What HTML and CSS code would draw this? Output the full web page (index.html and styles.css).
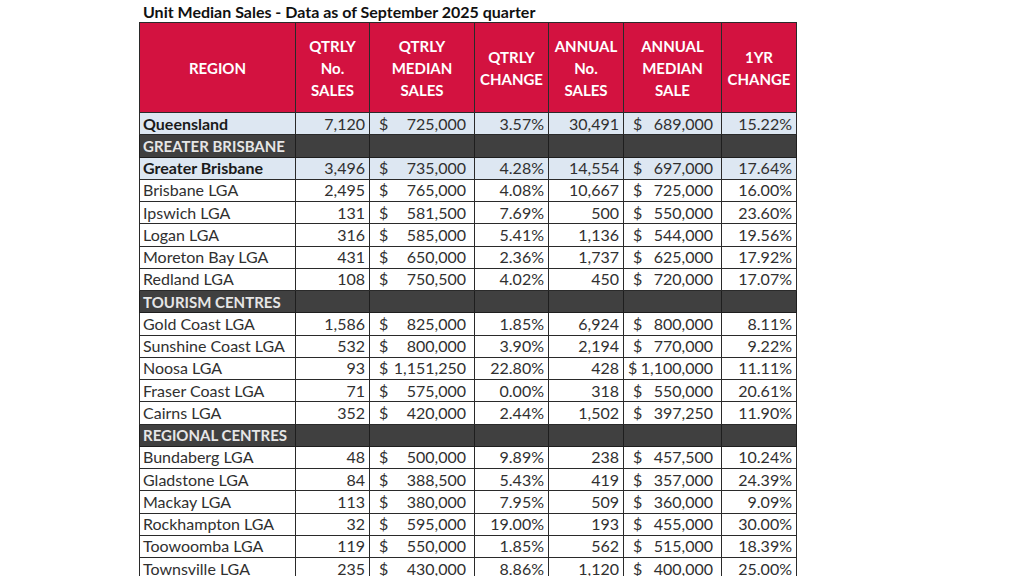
FILE: index.html
```html
<!DOCTYPE html>
<html>
<head>
<meta charset="utf-8">
<link rel="stylesheet" href="styles.css">
</head>
<body>
<div class="sheet">
  <h1 class="title">Unit Median Sales - Data as of September 2025 quarter</h1>
  <table class="grid">
    <colgroup>
      <col class="c-region"><col class="c-num"><col class="c-med"><col class="c-chg"><col class="c-anum"><col class="c-amed"><col class="c-yr">
    </colgroup>
    <thead>
      <tr>
        <th>REGION</th>
        <th>QTRLY<br>No.<br>SALES</th>
        <th>QTRLY<br>MEDIAN<br>SALES</th>
        <th>QTRLY<br>CHANGE</th>
        <th>ANNUAL<br>No.<br>SALES</th>
        <th>ANNUAL<br>MEDIAN<br>SALE</th>
        <th>1YR<br>CHANGE</th>
      </tr>
    </thead>
    <tbody>
      <tr class="total"><td class="name">Queensland</td><td>7,120</td><td class="money"><span>$</span><span>725,000</span></td><td>3.57%</td><td>30,491</td><td class="money"><span>$</span><span>689,000</span></td><td>15.22%</td></tr>
      <tr class="section"><td class="name">GREATER BRISBANE</td><td></td><td></td><td></td><td></td><td></td><td></td></tr>
      <tr class="total"><td class="name">Greater Brisbane</td><td>3,496</td><td class="money"><span>$</span><span>735,000</span></td><td>4.28%</td><td>14,554</td><td class="money"><span>$</span><span>697,000</span></td><td>17.64%</td></tr>
      <tr><td class="name">Brisbane LGA</td><td>2,495</td><td class="money"><span>$</span><span>765,000</span></td><td>4.08%</td><td>10,667</td><td class="money"><span>$</span><span>725,000</span></td><td>16.00%</td></tr>
      <tr><td class="name">Ipswich LGA</td><td>131</td><td class="money"><span>$</span><span>581,500</span></td><td>7.69%</td><td>500</td><td class="money"><span>$</span><span>550,000</span></td><td>23.60%</td></tr>
      <tr><td class="name">Logan LGA</td><td>316</td><td class="money"><span>$</span><span>585,000</span></td><td>5.41%</td><td>1,136</td><td class="money"><span>$</span><span>544,000</span></td><td>19.56%</td></tr>
      <tr><td class="name">Moreton Bay LGA</td><td>431</td><td class="money"><span>$</span><span>650,000</span></td><td>2.36%</td><td>1,737</td><td class="money"><span>$</span><span>625,000</span></td><td>17.92%</td></tr>
      <tr><td class="name">Redland LGA</td><td>108</td><td class="money"><span>$</span><span>750,500</span></td><td>4.02%</td><td>450</td><td class="money"><span>$</span><span>720,000</span></td><td>17.07%</td></tr>
      <tr class="section"><td class="name">TOURISM CENTRES</td><td></td><td></td><td></td><td></td><td></td><td></td></tr>
      <tr><td class="name">Gold Coast LGA</td><td>1,586</td><td class="money"><span>$</span><span>825,000</span></td><td>1.85%</td><td>6,924</td><td class="money"><span>$</span><span>800,000</span></td><td>8.11%</td></tr>
      <tr><td class="name">Sunshine Coast LGA</td><td>532</td><td class="money"><span>$</span><span>800,000</span></td><td>3.90%</td><td>2,194</td><td class="money"><span>$</span><span>770,000</span></td><td>9.22%</td></tr>
      <tr><td class="name">Noosa LGA</td><td>93</td><td class="money"><span>$</span><span>1,151,250</span></td><td>22.80%</td><td>428</td><td class="money tight"><span>$</span><span>1,100,000</span></td><td>11.11%</td></tr>
      <tr><td class="name">Fraser Coast LGA</td><td>71</td><td class="money"><span>$</span><span>575,000</span></td><td>0.00%</td><td>318</td><td class="money"><span>$</span><span>550,000</span></td><td>20.61%</td></tr>
      <tr><td class="name">Cairns LGA</td><td>352</td><td class="money"><span>$</span><span>420,000</span></td><td>2.44%</td><td>1,502</td><td class="money"><span>$</span><span>397,250</span></td><td>11.90%</td></tr>
      <tr class="section"><td class="name">REGIONAL CENTRES</td><td></td><td></td><td></td><td></td><td></td><td></td></tr>
      <tr><td class="name">Bundaberg LGA</td><td>48</td><td class="money"><span>$</span><span>500,000</span></td><td>9.89%</td><td>238</td><td class="money"><span>$</span><span>457,500</span></td><td>10.24%</td></tr>
      <tr><td class="name">Gladstone LGA</td><td>84</td><td class="money"><span>$</span><span>388,500</span></td><td>5.43%</td><td>419</td><td class="money"><span>$</span><span>357,000</span></td><td>24.39%</td></tr>
      <tr><td class="name">Mackay LGA</td><td>113</td><td class="money"><span>$</span><span>380,000</span></td><td>7.95%</td><td>509</td><td class="money"><span>$</span><span>360,000</span></td><td>9.09%</td></tr>
      <tr><td class="name">Rockhampton LGA</td><td>32</td><td class="money"><span>$</span><span>595,000</span></td><td>19.00%</td><td>193</td><td class="money"><span>$</span><span>455,000</span></td><td>30.00%</td></tr>
      <tr><td class="name">Toowoomba LGA</td><td>119</td><td class="money"><span>$</span><span>550,000</span></td><td>1.85%</td><td>562</td><td class="money"><span>$</span><span>515,000</span></td><td>18.39%</td></tr>
      <tr><td class="name">Townsville LGA</td><td>235</td><td class="money"><span>$</span><span>430,000</span></td><td>8.86%</td><td>1,120</td><td class="money"><span>$</span><span>400,000</span></td><td>25.00%</td></tr>
    </tbody>
  </table>
</div>
</body>
</html>
```

FILE: styles.css
```css
html, body {
  margin: 0;
  padding: 0;
  background: #ffffff;
  height: 576px;
  overflow: hidden;
}

.sheet {
  padding-left: 139px;
  font-family: Lato, "Liberation Sans", sans-serif;
  color: #303030;
}

.title {
  margin: 0;
  padding: 1px 0 0 4px;
  height: 21px;
  font-size: 16px;
  line-height: 21px;
  font-weight: 700;
  color: #111111;
  white-space: nowrap;
}

.grid {
  border-collapse: collapse;
  table-layout: fixed;
  width: 657px;
  font-size: 16px;
}

.c-region { width: 156px; }
.c-num { width: 74px; }
.c-med { width: 105px; }
.c-chg { width: 74px; }
.c-anum { width: 75px; }
.c-amed { width: 98px; }
.c-yr { width: 75px; }

.grid th {
  background: #d31240;
  color: #ffffff;
  font-weight: 700;
  font-size: 15px;
  line-height: 22px;
  height: 89px;
  padding: 0;
  border: 1px solid #2a2a2a;
  text-align: center;
  vertical-align: middle;
}

.grid td {
  height: 21.25px;
  padding: 0 4px 0 3px;
  border: 1px solid #2a2a2a;
  text-align: right;
  white-space: nowrap;
  line-height: 20px;
  vertical-align: middle;
}

.grid td.name {
  text-align: left;
}

.grid td.money {
  text-align: right;
  padding: 0 8px 0 9px;
}

.grid td.money.tight {
  padding-left: 4px;
}

.grid td.money span {
  display: inline-block;
}

.grid td.money span:first-child {
  float: left;
}

.total td {
  background: #dde7f2;
}

.total td.name {
  font-weight: 700;
  color: #1a1a1a;
}

.section td {
  background: #404040;
  border-color: #1e1e1e;
}

.section td.name {
  color: #e6e6e6;
  font-weight: 700;
  font-size: 15px;
}
```
